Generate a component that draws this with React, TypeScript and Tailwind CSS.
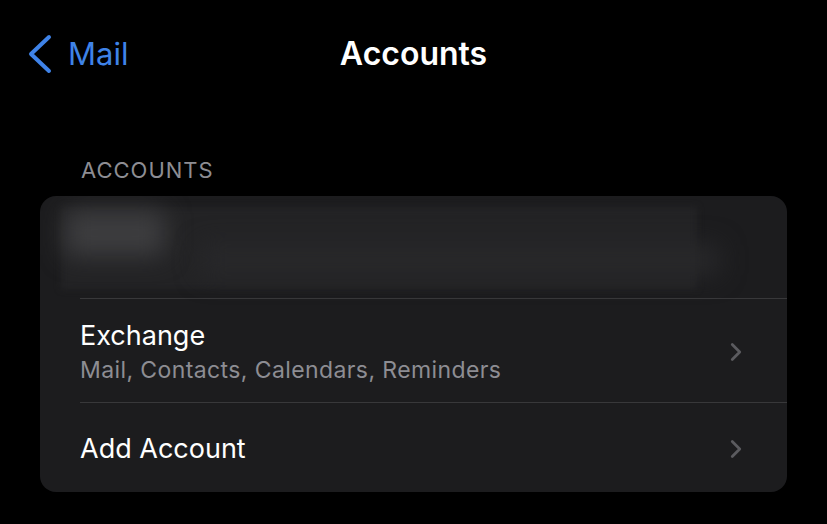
import { ChevronRight } from 'lucide-react'

function Row({ title, subtitle, last }: { title: string; subtitle?: string; last?: boolean }) {
  return (
    <div className="flex items-stretch pl-10">
      <div className={`flex flex-1 items-center pr-[36px] pt-[3px] ${last ? '' : 'border-b border-[#38383a]'} ${subtitle ? 'h-[104px]' : 'h-[89px]'}`}>
        <div className="flex-1">
          <div className="text-[27px] leading-[32px] text-white">{title}</div>
          {subtitle && <div className="mt-[4px] text-[23px] leading-[28px] tracking-[0.4px] text-[#8d8d93]">{subtitle}</div>}
        </div>
        <ChevronRight className="h-[30px] w-[30px] text-[#5b5b5f]" strokeWidth={2.2} />
      </div>
    </div>
  )
}

export default function App() {
  return (
    <div className="h-[524px] w-[827px] overflow-hidden bg-black" style={{ fontFamily: 'Inter, "Noto Sans", sans-serif' }}>
      {/* Nav bar */}
      <div className="relative flex h-[106px] items-start pt-[32px]">
        <div className="flex items-center pl-[26px] text-[#3f83e8]">
          <svg width="28" height="44" viewBox="0 0 28 44" fill="none">
            <path d="M23 5 L5 22 L23 39" stroke="currentColor" strokeWidth="4" strokeLinecap="round" strokeLinejoin="round" />
          </svg>
          <span className="ml-[14px] text-[31px] leading-[44px]">Mail</span>
        </div>
        <div className="absolute left-0 right-0 top-[32px] text-center text-[32px] font-semibold leading-[44px] text-white">
          Accounts
        </div>
      </div>

      {/* Section header */}
      <div className="px-[81px] pb-[12px] pt-[50px] text-[22px] leading-[28px] tracking-[1px] text-[#8d8d93]">ACCOUNTS</div>

      {/* Card */}
      <div className="mx-[40px] overflow-hidden rounded-[16px] bg-[#1c1c1e]">
        <div className="pl-10">
          <div className="relative h-[103px] border-b border-[#38383a]">
            <div className="absolute left-[-19px] right-[90px] top-[11px] h-[82px] bg-[#232325] blur-[3px]" />
            <div className="absolute left-[-15px] top-[14px] h-[46px] w-[100px] rounded-md bg-[#3d3d3f] blur-md" />
            <div className="absolute left-[120px] top-[48px] h-[32px] w-[520px] rounded-md bg-[#28282a] blur-md" />
          </div>
        </div>
        <Row title="Exchange" subtitle="Mail, Contacts, Calendars, Reminders" />
        <Row title="Add Account" last />
      </div>
    </div>
  )
}
